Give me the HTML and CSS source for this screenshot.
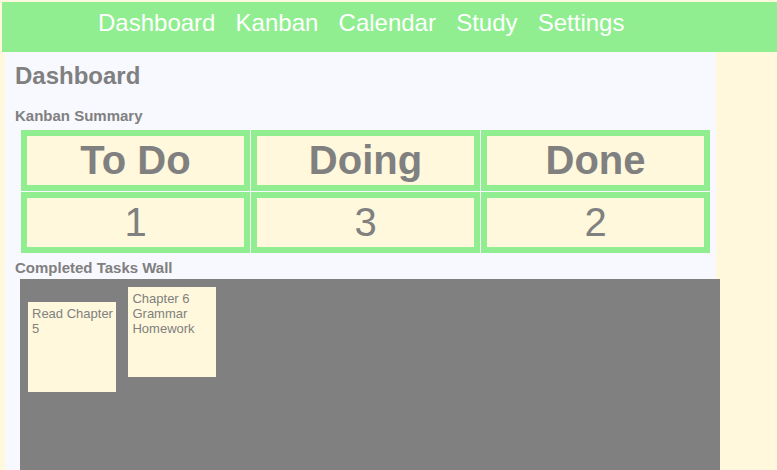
FILE: index.html
```html
<!DOCTYPE html>
<html>
<head>
<meta charset="utf-8">
<link rel="stylesheet" href="styles.css">
</head>
<body>
<nav class="nav">
  <a class="nav-link">Dashboard</a>
  <a class="nav-link">Kanban</a>
  <a class="nav-link">Calendar</a>
  <a class="nav-link">Study</a>
  <a class="nav-link">Settings</a>
</nav>
<main class="panel">
  <h1 class="title">Dashboard</h1>
  <h2 class="section">Kanban Summary</h2>
  <table class="summary">
    <tr>
      <th>To Do</th>
      <th>Doing</th>
      <th>Done</th>
    </tr>
    <tr>
      <td>1</td>
      <td>3</td>
      <td>2</td>
    </tr>
  </table>
  <h2 class="section section-wall">Completed Tasks Wall</h2>
  <div class="wall"><div class="note">Read Chapter 5</div> <div class="note">Chapter 6 Grammar Homework</div></div>
</main>
</body>
</html>
```
FILE: styles.css
```css
html, body {
  margin: 0;
  padding: 0;
  overflow: hidden;
}
body {
  background: #fff8dc;
  font-family: "Liberation Sans", Arial, sans-serif;
  color: #808080;
  height: 470px;
}
.nav {
  margin: 2px 0 0 2px;
  height: 50px;
  box-sizing: border-box;
  background: #90ee90;
  padding: 7px 0 0 96px;
  display: flex;
  gap: 20.2px;
}
.nav-link {
  color: #ffffff;
  font-size: 24px;
  line-height: normal;
  text-decoration: none;
}
.panel {
  margin-left: 5px;
  width: 711px;
  box-sizing: border-box;
  background: #f8f8ff;
  padding: 10px 10px 0;
  height: 418px;
}
.title {
  margin: 0;
  font-size: 24px;
  font-weight: bold;
  line-height: normal;
}
.section {
  margin: 17px 0 0;
  font-size: 15px;
  font-weight: bold;
  line-height: normal;
}
.section-wall {
  margin-top: 5px;
}
.summary {
  margin: 5px 0 0 5px;
  width: 691px;
  table-layout: fixed;
  border-collapse: separate;
  border-spacing: 1px;
}
.summary th,
.summary td {
  border: 6px solid #90ee90;
  padding: 2px 1px;
  background: #fff8dc;
  font-size: 40px;
  line-height: normal;
  text-align: center;
  color: #808080;
}
.summary th {
  font-weight: bold;
}
.summary td {
  font-weight: normal;
}
.wall {
  margin: 3px 0 0 5px;
  width: 700px;
  height: 200px;
  box-sizing: border-box;
  background: #808080;
  padding: 4px;
}
.note {
  display: inline-block;
  vertical-align: baseline;
  width: 81px;
  height: 82px;
  padding: 4px 3px 4px 4px;
  margin: 4px;
  background: #fff8dc;
  font-size: 13px;
  line-height: normal;
  color: #808080;
}
```
